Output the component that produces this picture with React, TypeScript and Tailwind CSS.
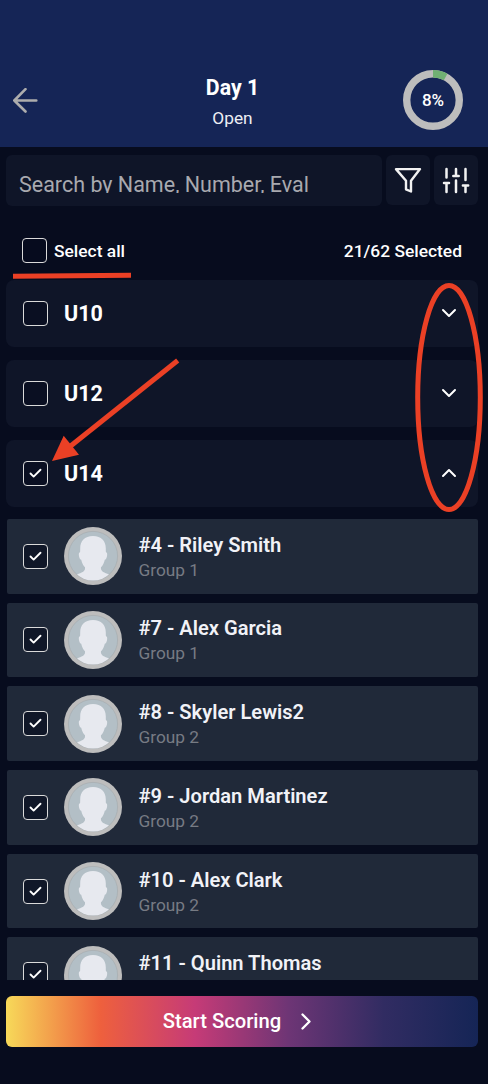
import { Check } from 'lucide-react';

interface Player {
    number: number;
    name: string;
    group: string;
}

const divisions = [
    { name: 'U10', open: false },
    { name: 'U12', open: false },
    { name: 'U14', open: true },
];

const players: Player[] = [
    { number: 4, name: 'Riley Smith', group: 'Group 1' },
    { number: 7, name: 'Alex Garcia', group: 'Group 1' },
    { number: 8, name: 'Skyler Lewis2', group: 'Group 2' },
    { number: 9, name: 'Jordan Martinez', group: 'Group 2' },
    { number: 10, name: 'Alex Clark', group: 'Group 2' },
    { number: 11, name: 'Quinn Thomas', group: 'Group 2' },
];

function Checkbox({ checked = false }: { checked?: boolean }) {
    return (
        <span className="flex h-[25px] w-[25px] shrink-0 items-center justify-center rounded-[4px] border-[1.5px] border-[#dadada] bg-[#070c1e]/60">
            {checked && <Check className="text-white" size={15} strokeWidth={3} />}
        </span>
    );
}

function Avatar() {
    return (
        <svg className="shrink-0" width="58" height="58" viewBox="0 0 58 58">
            <defs>
                <clipPath id="face">
                    <circle cx="29" cy="29" r="24.5" />
                </clipPath>
            </defs>
            <circle cx="29" cy="29" r="29" fill="#bdbdbd" />
            <circle cx="29" cy="29" r="24.6" fill="#b3bfc6" stroke="#a3a9ac" strokeWidth="0.6" />
            <path
                clipPath="url(#face)"
                fill="#e7e9ef"
                d="M29 9C20.500 9 16.200 14 16.200 21.500C16.200 23.500 16.200 24.500 16 25.300C14.500 25.500 14.700 28 15.200 30C15.600 31.500 16.300 32.700 17.200 32.800C18.100 36.500 19.300 38.700 21 40.300C21.600 44.300 18 45.200 13 47.500L12 55L46 55L45 47.500C40 45.200 36.400 44.300 37 40.300C38.700 38.700 39.900 36.500 40.800 32.800C41.700 32.700 42.400 31.500 42.800 30C43.300 28 43.500 25.500 42 25.300C41.800 24.500 41.800 23.500 41.800 21.500C41.800 14 37.500 9 29 9Z"
            />
        </svg>
    );
}

function ProgressRing({ percent }: { percent: number }) {
    return (
        <div className="grid h-[60px] w-[60px] place-items-center">
            <svg className="col-start-1 row-start-1" width="60" height="60" viewBox="0 0 60 60">
                <circle cx="30" cy="30" r="26.300" fill="none" stroke="#bdbdbd" strokeWidth="7.400" />
                <circle
                    cx="30"
                    cy="30"
                    r="26.300"
                    fill="none"
                    stroke="#70b073"
                    strokeWidth="7.400"
                    pathLength={100}
                    strokeDasharray={`${percent} 100`}
                    transform="rotate(-90 30 30)"
                />
            </svg>
            <span className="col-start-1 row-start-1 text-[17px] leading-5 font-medium">{percent}%</span>
        </div>
    );
}

function Header() {
    return (
        <header className="flex h-[147px] shrink-0 items-start bg-[#152556] pt-[70px] pr-[25px] pl-[13px]">
            <svg className="mt-[18px] shrink-0" width="25" height="25" viewBox="0 0 25 25" fill="none" stroke="#adadad" strokeWidth="2.600" strokeLinecap="round" strokeLinejoin="round">
                <path d="M12.500 1.200L1.300 12.500L12.500 23.500M1.300 12.500H23.300" />
            </svg>
            <div className="flex-1 pl-6 text-center">
                <h1 className="mt-1 text-[21.300px] leading-7 font-bold">Day 1</h1>
                <p className="mt-1 text-[17.300px] leading-6 text-[#eceef3]">Open</p>
            </div>
            <ProgressRing percent={8} />
        </header>
    );
}

function SearchBar() {
    return (
        <div className="flex gap-1 px-1.5 pt-2">
            <div className="h-[51px] w-[376px] rounded-md bg-[#0f1528] pt-[17px] pl-[13px]">
                <div className="h-[21px] overflow-hidden text-[21.500px] leading-[26px] whitespace-nowrap text-[#a8a9af]">
                    Search by Name, Number, Eval
                </div>
            </div>
            <button className="flex h-[50px] w-11 items-center justify-center rounded-md bg-[#0f1528]">
                <svg width="28" height="28" viewBox="0 0 28 28" fill="none" stroke="#f2f2f2" strokeWidth="2.400" strokeLinejoin="round">
                    <path d="M2 3.100H26L17 14.700V25.500L12 23.300V14.700Z" />
                </svg>
            </button>
            <button className="flex h-[50px] w-11 items-center justify-center rounded-md bg-[#0f1528]">
                <svg width="28" height="28" viewBox="0 0 28 28" fill="none" stroke="#f2f2f2" strokeWidth="2.500" strokeLinecap="round">
                    <path d="M4.500 3V11.500M4.500 17V26M2 17H7M14 3V9.700M11.300 10H16.700M14 14.500V26M23.500 3V14M23.500 19.500V26M20.900 19.500H26.200" />
                </svg>
            </button>
        </div>
    );
}

function DivisionRow({ name, open }: { name: string; open: boolean }) {
    return (
        <div className="flex h-[67px] items-center rounded-lg bg-[#0f1528] pr-[21px] pl-[17px]">
            <Checkbox checked={open} />
            <span className="ml-4 flex-1 pt-px text-[21.500px] leading-7 font-bold">{name}</span>
            <svg width="16" height="10" viewBox="0 0 16 10" fill="none" stroke="white" strokeWidth="2" strokeLinecap="round" strokeLinejoin="round">
                <path d={open ? 'M2 8L8 2L14 8' : 'M2 2L8 8L14 2'} />
            </svg>
        </div>
    );
}

function PlayerRow({ player }: { player: Player }) {
    return (
        <div className="flex h-[74.500px] w-[471px] shrink-0 items-center rounded-[2px] bg-[#202939] pl-[16px]">
            <Checkbox checked />
            <div className="ml-4">
                <Avatar />
            </div>
            <div className="ml-[16.500px] pt-0.5">
                <p className="text-[20.100px] leading-6 font-semibold text-[#f1f2f7]">
                    #{player.number} - {player.name}
                </p>
                <p className="mt-px text-[17.300px] leading-6 text-[#777b84]">{player.group}</p>
            </div>
        </div>
    );
}

// Red pen marks drawn over the screen
function Annotations() {
    return (
        <svg className="pointer-events-none absolute inset-0" width="488" height="1084" viewBox="0 0 488 1084" fill="none" stroke="#eb4025">
            <path d="M13 276.300L131 275.300" strokeWidth="5" />
            <path d="M177.700 360.500L70 446.500" strokeWidth="5" />
            <path d="M52 461L63.700 435.700L79 454.700Z" fill="#eb4025" stroke="none" />
            <ellipse cx="449" cy="397.500" rx="31.300" ry="112" strokeWidth="5" />
        </svg>
    );
}

export default function App() {
    return (
        <div className="relative flex h-[1084px] w-[488px] flex-col overflow-hidden bg-[#070c1e] font-[Roboto,sans-serif] text-white">
            <Header />
            <SearchBar />
            <div className="flex h-[73.500px] items-center pt-4 pr-[26px] pl-[22px] text-[17.400px] leading-6 font-[550]">
                <Checkbox />
                <span className="ml-[7px] flex-1">Select all</span>
                <span>21/62 Selected</span>
            </div>
            <div className="flex flex-col gap-[13px] pr-2.5 pl-1.5">
                {divisions.map((division) => (
                    <DivisionRow key={division.name} name={division.name} open={division.open} />
                ))}
            </div>
            <div className="mt-[12.500px] flex h-[461px] shrink-0 flex-col gap-[9.200px] overflow-hidden pl-[7px]">
                {players.map((player) => (
                    <PlayerRow key={player.number} player={player} />
                ))}
            </div>
            <button className="mt-4 ml-1.5 flex h-[51px] w-[472px] shrink-0 items-center justify-center gap-5 rounded-md bg-[linear-gradient(90deg,#f7d959_0%,#ee603d_20%,#c63b77_40%,#6d3575_60%,#312c62_80%,#152556_100%)] pr-2.5 text-[20.200px] font-[550]">
                Start Scoring
                <svg width="10" height="17" viewBox="0 0 10 17" fill="none" stroke="white" strokeWidth="2.300" strokeLinecap="round" strokeLinejoin="round">
                    <path d="M1.500 1.500L8.500 8.500L1.500 15.500" />
                </svg>
            </button>
            <Annotations />
        </div>
    );
}
